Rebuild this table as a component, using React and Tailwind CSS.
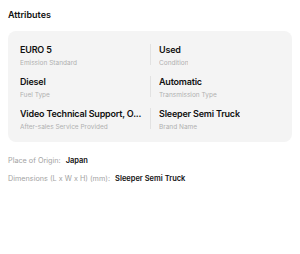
const attributes = [
  { value: "EURO 5", label: "Emission Standard" },
  { value: "Used", label: "Condition" },
  { value: "Diesel", label: "Fuel Type" },
  { value: "Automatic", label: "Transmission Type" },
  { value: "Video Technical Support, O...", label: "After-sales Service Provided" },
  { value: "Sleeper Semi Truck", label: "Brand Name" },
];

const details = [
  { label: "Place of Origin:", value: "Japan" },
  { label: "Dimensions (L x W x H) (mm):", value: "Sleeper Semi Truck" },
];

export default function App() {
  return (
    <div
      className="w-[300px] h-[254px] bg-white px-2 pt-[9px]"
      style={{ fontFamily: "Inter, 'Noto Sans', sans-serif" }}
    >
      <h3 className="text-[9px] leading-[12px] font-semibold text-[#111]">Attributes</h3>

      <div className="mt-2.5 rounded-lg bg-[#f4f4f4] px-3 pt-[13px] pb-2.5">
        <div className="grid grid-cols-2 gap-y-2">
          {attributes.map((item, i) => (
            <div
              key={item.label}
              className={i % 2 === 1 ? "flex min-w-0" : "min-w-0"}
            >
              {i % 2 === 1 && <div className="mr-2 mb-[3px] w-px shrink-0 bg-[#e2e2e2]" />}
              <div className="min-w-0">
                <div className="truncate text-[9px] leading-[11px] font-semibold tracking-[-0.2px] text-[#111]">
                  {item.value}
                </div>
                <div className="mt-1 truncate text-[6.5px] leading-[9px] text-[#b0b0b0]">
                  {item.label}
                </div>
              </div>
            </div>
          ))}
        </div>
      </div>

      <div className="mt-[13px] flex flex-col gap-1.5">
        {details.map((d) => (
          <div key={d.label} className="flex items-baseline gap-[5px] leading-[12px]">
            <span className="text-[7.25px] text-[#a3a3a3]">{d.label}</span>
            <span className="text-[7.5px] font-semibold text-[#111]">{d.value}</span>
          </div>
        ))}
      </div>
    </div>
  );
}
